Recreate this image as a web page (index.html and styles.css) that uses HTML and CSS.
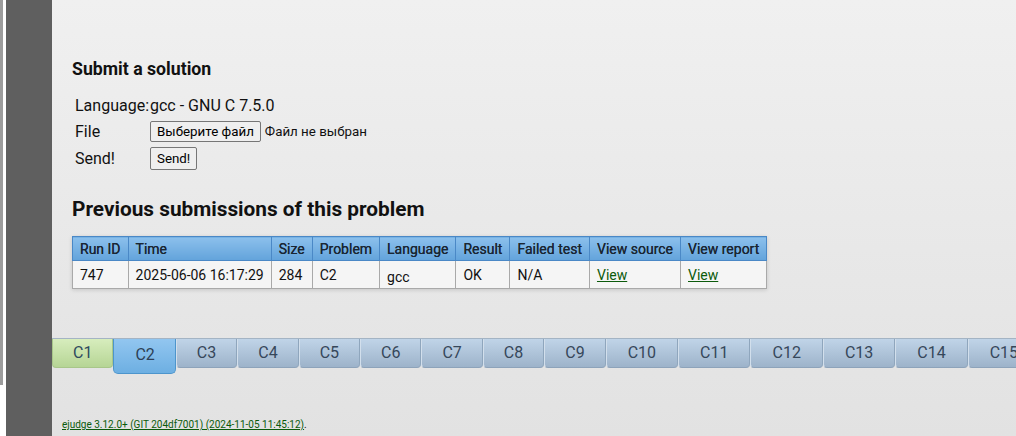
FILE: index.html
```html
<!DOCTYPE html>
<html>
<head>
<meta charset="utf-8">
<link rel="stylesheet" href="styles.css">
</head>
<body>
<div class="frame">
  <div class="edge"><div class="edge-line"></div></div>
  <div class="sidebar"></div>
  <div class="main">
    <div class="content">
      <h3 class="h3">Submit a solution</h3>
      <div class="form">
        <div class="lbl">Language:</div><div class="val">gcc - GNU C 7.5.0</div>
        <div class="lbl">File</div><div class="val"><span class="btn">Выберите файл</span><span class="nofile">Файл не выбран</span></div>
        <div class="lbl">Send!</div><div class="val"><span class="btn btn-send">Send!</span></div>
      </div>
      <h2 class="h2">Previous submissions of this problem</h2>
      <table class="tbl">
        <tr class="head">
          <th>Run ID</th><th>Time</th><th>Size</th><th>Problem</th><th>Language</th><th>Result</th><th>Failed test</th><th>View source</th><th>View report</th>
        </tr>
        <tr>
          <td>747</td><td>2025-06-06 16:17:29</td><td>284</td><td>C2</td><td class="low">gcc</td><td>OK</td><td>N/A</td><td><a href="#">View</a></td><td><a href="#">View</a></td>
        </tr>
      </table>
    </div>
    <div class="tabs">
      <div class="tab green">C1</div>
      <div class="tab active">C2</div>
      <div class="tab">C3</div>
      <div class="tab">C4</div>
      <div class="tab">C5</div>
      <div class="tab">C6</div>
      <div class="tab">C7</div>
      <div class="tab">C8</div>
      <div class="tab">C9</div>
      <div class="tab">C10</div>
      <div class="tab">C11</div>
      <div class="tab">C12</div>
      <div class="tab">C13</div>
      <div class="tab">C14</div>
      <div class="tab">C15</div>
    </div>
    <div class="footer"><a href="#">ejudge 3.12.0+ (GIT 204df7001) (2024-11-05 11:45:12)</a>.</div>
  </div>
</div>
</body>
</html>
```
FILE: styles.css
```css
html, body { margin: 0; padding: 0; }
body { width: 1016px; height: 436px; overflow: hidden; font-family: Roboto, "Liberation Sans", sans-serif; background: #fff; }
.frame { display: flex; height: 436px; }
.edge { width: 6px; background: #fff; }
.edge-line { width: 3px; height: 385px; background: #9c9c9c; }
.sidebar { width: 46px; background: #5f5f5f; }
.main { flex: 1; min-width: 0; background: linear-gradient(to bottom, #f0f0f0 0%, #e9e9e9 50%, #e2e2e2 100%); display: flex; flex-direction: column; overflow: hidden; }
.content { padding: 58px 0 0 20px; }
.h3 { margin: 0; font-size: 17.7px; font-weight: bold; line-height: 22px; color: #111; }
.form { display: grid; grid-template-columns: 75px auto; margin: 15px 0 0 3px; align-items: center; row-gap: 5px; font-size: 16px; color: #111; }
.lbl, .val { line-height: 21px; display: flex; align-items: center; }
.btn { font-family: Roboto, "Liberation Sans", sans-serif; font-size: 13.33px; border: 1px solid #767676; border-radius: 2px; background: #efefef; padding: 1px 6px; line-height: 17px; color: #000; }
.btn-send { padding: 2px 6px; }
.nofile { font-size: 13.33px; margin-left: 4px; }
.h2 { margin: 26px 0 0 0; font-size: 20.8px; font-weight: bold; line-height: 26px; color: #111; }
.tbl { margin-top: 14px; border-collapse: collapse; font-size: 14px; box-shadow: 0 1px 4px rgba(0,0,0,0.15); }
.tbl th { background: linear-gradient(to bottom, #8cc0ec, #62a3db); border: 1px solid #4a88c6; font-weight: normal; text-shadow: 0 0 0.6px #1a2633; text-align: left; padding: 3px 7px; height: 17px; color: #1a2633; white-space: nowrap; }
.tbl td { background: #f5f5f5; border: 1px solid #a9a9a9; padding: 4px 7px; height: 19px; color: #111; white-space: nowrap; }
.tbl td.low { padding-top: 6px; padding-bottom: 2px; }
.tbl a { color: #0b5a0b; }
.tabs { display: flex; margin-top: 49px; height: 36px; align-items: flex-start; border-top: 1px solid #a4b4c4; width: max-content; }
.tab { flex: none; padding: 4px 20px 0; height: 24px; font-size: 16px; color: #36475a; text-align: center; background: linear-gradient(to bottom, #c0d4e8, #9db3ca); border-right: 1px solid #8fa6bd; border-left: 1px solid #d2dfec; border-bottom: 1px solid #8da3ba; border-radius: 0 0 4px 4px; line-height: 20px; }
.tab:nth-child(n+10) { padding: 4px 21px 0; }
.tab.green { background: linear-gradient(to bottom, #d7edbd, #b6d595); border-color: #a8c68a; color: #2e4a5e; }
.tab.active { background: linear-gradient(to bottom, #92c6f0, #6dafe2); border: 1px solid #4d95cc; border-top: none; height: 28px; padding: 6px 20px 0 21px; color: #2d3f55; border-radius: 0 0 5px 5px; }
.footer { margin-top: auto; padding: 0 0 5px 10px; font-size: 10px; line-height: 13px; color: #111; }
.footer a { color: #0b5a0b; }
```
